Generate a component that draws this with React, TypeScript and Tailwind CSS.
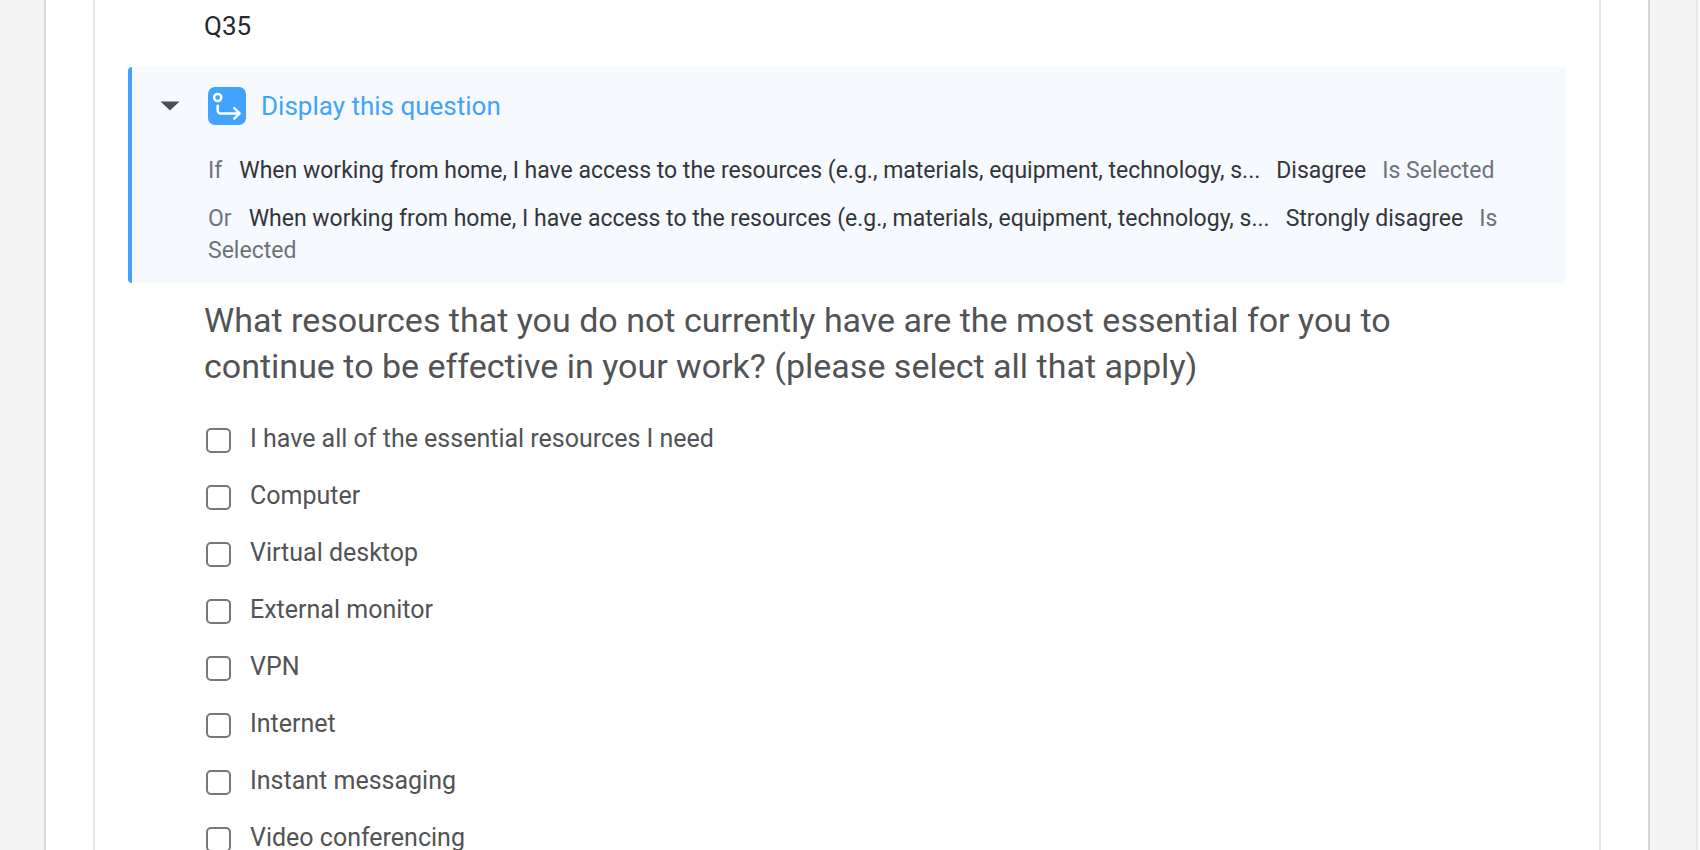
import React, { useState } from "react";

const resourceText =
  "When working from home, I have access to the resources (e.g., materials, equipment, technology, s...";

const conditions = [
  { operator: "If", answer: "Disagree" },
  { operator: "Or", answer: "Strongly disagree" },
];

const choices = [
  "I have all of the essential resources I need",
  "Computer",
  "Virtual desktop",
  "External monitor",
  "VPN",
  "Internet",
  "Instant messaging",
  "Video conferencing",
];

const BranchIcon = () => (
  <svg
    viewBox="0 0 38 38"
    className="h-[38px] w-[38px] shrink-0"
    fill="none"
    aria-hidden="true"
  >
    <rect width="38" height="38" rx="7" fill="#42a2ff" />
    <g stroke="#fff" strokeWidth="2.5" strokeLinecap="round" strokeLinejoin="round">
      <circle cx="9.7" cy="10.5" r="3.6" />
      <path d="M9.7 18.8v4.6a3 3 0 0 0 3 3h18.5" />
      <path d="M26.3 21.2l5.2 5.2-5.2 5.2" />
    </g>
  </svg>
);

const DisplayLogic = () => {
  const [isOpen, setIsOpen] = useState(true);

  return (
    <section className="rounded-l-sm border-l-4 border-[#42a2ff] bg-[#f6f9fe] pt-5 pb-4 pl-7">
      <div className="flex items-center">
        <button
          onClick={() => setIsOpen(!isOpen)}
          aria-label="Toggle display logic"
          aria-expanded={isOpen}
          className="flex h-[38px] w-12 items-center"
        >
          <svg viewBox="0 0 20 10" className="h-[10px] w-5" aria-hidden="true">
            <path d="M0.5 0.5h19L10 9.5z" fill="#4b4f54" />
          </svg>
        </button>
        <BranchIcon />
        <a href="#display-logic" className="ml-[15px] text-[26px] leading-8 text-[#42a2ff]">
          Display this question
        </a>
      </div>
      {isOpen && (
        <div className="mt-[30px] mr-12 ml-12 space-y-4 text-[23px] leading-8 text-[#32363a]">
          {conditions.map((condition) => (
            <p key={condition.operator}>
              <span className="mr-[17px] text-[#6f7377]">{condition.operator}</span>
              <span>{resourceText}</span>
              <span className="ml-4">{condition.answer}</span>
              <span className="ml-4 text-[#6f7377]">Is Selected</span>
            </p>
          ))}
        </div>
      )}
    </section>
  );
};

export default function App() {
  return (
    <div className="h-screen overflow-hidden bg-[#f9f9f9] pr-[2px] font-['Roboto',sans-serif]">
      <div className="h-full border-r-2 border-[#e8e8e8] bg-[#f4f4f4] pr-[46px] pl-11">
        <div className="h-full border-x-2 border-[#d6d6d6] bg-white px-[47px]">
          <main className="min-h-full border-x-2 border-[#e6e6e6] px-[33px] pt-[10px]">
            <p className="ml-[76px] text-[26px] leading-8 text-[#25282b]">Q35</p>
            <div className="mt-[25px]">
              <DisplayLogic />
            </div>
            <fieldset className="mt-[14px] ml-[76px] text-[#525354]">
              <legend className="mr-20 text-[34px] leading-[46px]">
                What resources that you do not currently have are the most essential
                for you to continue to be effective in your work? (please select all
                that apply)
              </legend>
              <ul className="mt-[33px]">
                {choices.map((choice) => (
                  <li key={choice} className="h-[57px]">
                    <label className="inline-flex items-start gap-[19px] text-[25px] leading-[34px]">
                      <input
                        type="checkbox"
                        className="mt-[6px] ml-[2px] h-[25px] w-[25px] shrink-0 appearance-none rounded-[5px] border-2 border-[#77787a] bg-white checked:bg-[#42a2ff]"
                      />
                      <span>{choice}</span>
                    </label>
                  </li>
                ))}
              </ul>
            </fieldset>
          </main>
        </div>
      </div>
    </div>
  );
}
